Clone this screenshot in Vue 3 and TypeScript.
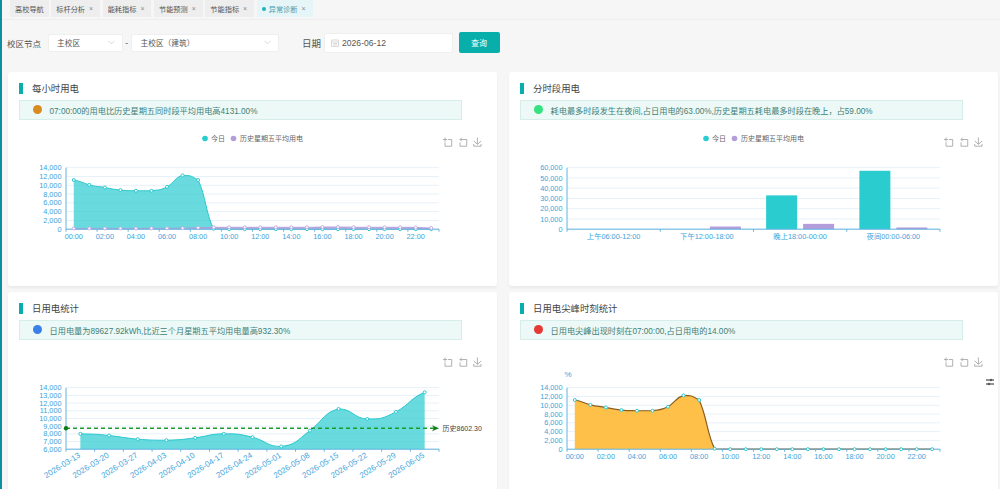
<template>
  <div class="page">
    <div class="tabs">
      <div
        v-for="t in tabs"
        :key="t.label"
        class="tab"
        :class="{ active: t.active, closable: t.closable }"
      >
        <i v-if="t.active" class="tab-dot"></i>
        <span>{{ t.label }}</span>
        <span v-if="t.closable" class="tab-x">×</span>
      </div>
    </div>

    <div class="filters">
      <span class="lbl">校区节点</span>
      <div class="select s1">
        <span>主校区</span>
        <svg class="chev" viewBox="0 0 8 5" width="7" height="5"><path d="M.5 .5 4 4 7.500 .5" /></svg>
      </div>
      <span class="dash">-</span>
      <div class="select s2">
        <span>主校区（建筑）</span>
        <svg class="chev" viewBox="0 0 8 5" width="7" height="5"><path d="M.5 .5 4 4 7.500 .5" /></svg>
      </div>
      <span class="lbl date-lbl">日期</span>
      <div class="date">
        <svg class="cal" viewBox="0 0 8 8" width="8" height="8">
          <path d="M.5 1h7v6.500h-7zM.5 3h7M2 4.500h4M2 6h4" />
        </svg>
        <span>2026-06-12</span>
      </div>
      <button class="query">查询</button>
    </div>

    <div class="grid">
      <section v-for="c in charts" :key="c.title" class="card">
        <h3 class="title">{{ c.title }}</h3>
        <div class="alert">
          <i class="alert-dot" :style="{ background: c.dot }"></i>
          <span>{{ c.message }}</span>
        </div>
        <svg class="chart" viewBox="0 0 489 167" width="489" height="167">
          <g v-if="c.legend" class="legend">
            <circle cx="197" cy="18.500" r="2.800" fill="#2accd0" />
            <text x="203" y="21">今日</text>
            <circle cx="225.500" cy="18.500" r="2.800" fill="#b39ddb" />
            <text x="232" y="21">历史星期五平均用电</text>
          </g>

          <g class="toolbox">
            <g transform="translate(435 17.500) scale(.15)">
              <path d="M0,13.500h26.900 M13.500,26.900V0 M32.100,13.500H58V58H13.500 V32.100" />
            </g>
            <g transform="translate(450.500 17.500) scale(.15)">
              <path d="M22,1.400L9.900,13.500l12.300,12.300 M10.300,13.500H54.900v44.600 H10.300v-26" />
            </g>
            <g transform="translate(465 17.500) scale(.15)">
              <path d="M4.700,22.900L29.300,45.500L54.700,23.400M4.600,43.600L4.600,58L53.800,58L53.800,43.600M29.200,45.100L29.200,0" />
            </g>
          </g>

          <text v-if="c.unit" class="axis-text unit" x="59" y="37" text-anchor="middle">{{ c.unit }}</text>

          <line
            v-for="t in c.yTicks"
            :key="t.label"
            class="gridline"
            :x1="L"
            :x2="R"
            :y1="t.y"
            :y2="t.y"
          />
          <text
            v-for="t in c.yTicks"
            :key="'l' + t.label"
            class="axis-text"
            :x="L - 4.500"
            :y="t.y + 2.600"
            text-anchor="end"
          >{{ t.label }}</text>

          <template v-for="s in c.series" :key="s.key">
            <path :d="s.area" :fill="s.fill" />
            <path :d="s.line" fill="none" :stroke="s.stroke" :stroke-width="s.width" />
          </template>

          <rect
            v-for="b in c.bars"
            :key="b.key"
            :x="b.x"
            :y="b.y"
            :width="b.w"
            :height="b.h"
            :fill="b.color"
          />

          <line class="axis" :x1="L" :x2="L" :y1="TOP" :y2="BOTTOM" />
          <line class="axis" :x1="L" :x2="R" :y1="BOTTOM" :y2="BOTTOM" />
          <line
            v-for="x in c.xTicks"
            :key="x"
            class="axis"
            :x1="x"
            :x2="x"
            :y1="BOTTOM"
            :y2="BOTTOM + 2.500"
          />

          <template v-for="s in c.series" :key="s.key + 'p'">
            <circle
              v-for="(p, i) in s.points"
              :key="i"
              :cx="p.x"
              :cy="p.y"
              r="1.500"
              fill="#fff"
              :stroke="s.symbol"
              stroke-width="1"
            />
          </template>

          <text
            v-for="l in c.xLabels"
            :key="l.text"
            class="axis-text"
            :class="{ slanted: l.rotate }"
            :x="l.x"
            :y="l.rotate ? l.y : BOTTOM + 10"
            :text-anchor="l.rotate ? 'end' : 'middle'"
            :transform="l.rotate ? `rotate(-32 ${l.x} ${l.y})` : undefined"
          >{{ l.text }}</text>

          <g v-if="c.mark">
            <line
              :x1="L"
              :x2="R - 3"
              :y1="c.mark.y"
              :y2="c.mark.y"
              stroke="#1c9a2a"
              stroke-width="1.500"
              stroke-dasharray="4 3"
            />
            <circle :cx="L" :cy="c.mark.y" r="2.200" fill="#0f7d17" />
            <path
              :d="`M${R - 7} ${c.mark.y - 3}L${R} ${c.mark.y}L${R - 7} ${c.mark.y + 3}L${R - 5} ${c.mark.y}Z`"
              fill="#0f7d17"
            />
            <text class="mark-text" :x="R + 3.500" :y="c.mark.y + 2.500">{{ c.mark.label }}</text>
          </g>
        </svg>
      </section>
    </div>

    <svg class="filter-btn" viewBox="0 0 8 8" width="8" height="8">
      <path d="M0 2h8M0 6h8M5 .8v2.400M3 4.800v2.400" />
    </svg>
  </div>
</template>

<script setup lang="ts">
interface Pt {
  x: number
  y: number
}

const L = 58
const R = 431
const TOP = 47.7
const BOTTOM = 109.2

const tabs = [
  { label: '高校导航', closable: false, active: false },
  { label: '标杆分析', closable: true, active: false },
  { label: '能耗指标', closable: true, active: false },
  { label: '节能预测', closable: true, active: false },
  { label: '节能指标', closable: true, active: false },
  { label: '异常诊断', closable: true, active: true }
]

const todayHours = [
  11200, 10100, 9500, 8900, 8750, 8750, 9650, 12250, 11200, 100, 0, 0,
  0, 0, 0, 0, 0, 0, 0, 0, 0, 0, 0, 0
]
const histHours = [
  180, 180, 180, 180, 180, 200, 200, 240, 350, 420, 430, 430,
  430, 430, 430, 430, 480, 500, 450, 430, 430, 430, 400, 280
]
const weekly = [
  8000, 7780, 7300, 7170, 7480, 8000, 7560, 6350, 8420, 11240, 9930, 10850, 13400
]
const dates = [
  '2026-03-13', '2026-03-20', '2026-03-27', '2026-04-03', '2026-04-10', '2026-04-17',
  '2026-04-24', '2026-05-01', '2026-05-08', '2026-05-15', '2026-05-22', '2026-05-29', '2026-06-05'
]

function scaleY(v: number, min: number, max: number) {
  return BOTTOM - ((v - min) / (max - min)) * (BOTTOM - TOP)
}

function yTicks(min: number, max: number, step: number) {
  const out = []
  for (let v = min; v <= max; v += step) {
    out.push({ y: scaleY(v, min, max), label: v.toLocaleString('en-US') })
  }
  return out
}

function toPoints(values: number[], min: number, max: number): Pt[] {
  const step = (R - L) / values.length
  return values.map((v, i) => ({ x: L + step * (i + 0.5), y: scaleY(v, min, max) }))
}

// same idea as echarts smooth: tangents from the neighbours, clamped so the curve does not overshoot
function smooth(pts: Pt[]) {
  let d = `M${pts[0].x} ${pts[0].y}`
  for (let i = 0; i < pts.length - 1; i++) {
    const p0 = pts[Math.max(i - 1, 0)]
    const p1 = pts[i]
    const p2 = pts[i + 1]
    const p3 = pts[Math.min(i + 2, pts.length - 1)]
    const lo = Math.min(p1.y, p2.y)
    const hi = Math.max(p1.y, p2.y)
    const c1y = Math.min(hi, Math.max(lo, p1.y + (p2.y - p0.y) * 0.3))
    const c2y = Math.min(hi, Math.max(lo, p2.y - (p3.y - p1.y) * 0.3))
    d += `C${p1.x + (p2.x - p1.x) * 0.5} ${c1y} ${p2.x - (p2.x - p1.x) * 0.5} ${c2y} ${p2.x} ${p2.y}`
  }
  return d
}

function makeSeries(key: string, values: number[], min: number, max: number, fill: string, stroke: string, symbol: string, width = 1) {
  const points = toPoints(values, min, max)
  const line = smooth(points)
  const last = points[points.length - 1]
  return {
    key,
    points,
    line,
    area: `${line}L${last.x} ${BOTTOM}L${points[0].x} ${BOTTOM}Z`,
    fill,
    stroke,
    symbol,
    width
  }
}

const hourStep = (R - L) / 24
const hourTicks = Array.from({ length: 13 }, (_, i) => L + hourStep * 2 * i)
const hourLabels = Array.from({ length: 12 }, (_, i) => ({
  text: `${String(i * 2).padStart(2, '0')}:00`,
  x: L + hourStep * (i * 2 + 0.5),
  y: 0,
  rotate: false
}))

const periodStep = (R - L) / 4
const periodNames = ['上午06:00-12:00', '下午12:00-18:00', '晚上18:00-00:00', '夜间00:00-06:00']
const periodToday = [0, 0, 33000, 57000]
const periodHist = [0, 2600, 5200, 1700]

const bars = periodNames.flatMap((_, i) => {
  const start = L + periodStep * i + (periodStep - 68) / 2
  const make = (key: string, v: number, x: number, color: string) => {
    const y = scaleY(v, 0, 60000)
    return { key, x, y, w: 31, h: BOTTOM - y, color }
  }
  return [
    make(`t${i}`, periodToday[i], start, '#2accd0'),
    make(`h${i}`, periodHist[i], start + 37, '#b39ddb')
  ]
})

const weekStep = (R - L) / 13

const charts = [
  {
    title: '每小时用电',
    dot: '#d98a20',
    message: '07:00:00的用电比历史星期五同时段平均用电高4131.00%',
    legend: true,
    unit: '',
    yTicks: yTicks(0, 14000, 2000),
    series: [
      makeSeries('today', todayHours, 0, 14000, 'rgba(42,204,208,.7)', '#2ac8d0', '#2ac8d0'),
      makeSeries('hist', histHours, 0, 14000, 'rgba(179,157,219,.8)', '#b39ddb', '#c4aee4')
    ],
    bars: [],
    xTicks: hourTicks,
    xLabels: hourLabels,
    mark: null
  },
  {
    title: '分时段用电',
    dot: '#35e27f',
    message: '耗电最多时段发生在夜间,占日用电的63.00%,历史星期五耗电最多时段在晚上，占59.00%',
    legend: true,
    unit: '',
    yTicks: yTicks(0, 60000, 10000),
    series: [],
    bars,
    xTicks: Array.from({ length: 5 }, (_, i) => L + periodStep * i),
    xLabels: periodNames.map((text, i) => ({ text, x: L + periodStep * (i + 0.5), y: 0, rotate: false })),
    mark: null
  },
  {
    title: '日用电统计',
    dot: '#3a80e8',
    message: '日用电量为89627.92kWh,比近三个月星期五平均用电量高932.30%',
    legend: false,
    unit: '',
    yTicks: yTicks(6000, 14000, 1000),
    series: [makeSeries('week', weekly, 6000, 14000, 'rgba(42,204,208,.7)', '#2ac8d0', '#2ac8d0')],
    bars: [],
    xTicks: Array.from({ length: 14 }, (_, i) => L + weekStep * i),
    xLabels: dates.map((text, i) => ({ text, x: L + weekStep * (i + 0.5) + 0.5, y: BOTTOM + 7.5, rotate: true })),
    mark: { y: 88.2, label: '历史8602.30' }
  },
  {
    title: '日用电尖峰时刻统计',
    dot: '#e53935',
    message: '日用电尖峰出现时刻在07:00:00,占日用电的14.00%',
    legend: false,
    unit: '%',
    yTicks: yTicks(0, 14000, 2000),
    series: [makeSeries('peak', todayHours, 0, 14000, '#ffc04a', '#8b5e1e', '#2ac8d0', 1.2)],
    bars: [],
    xTicks: hourTicks,
    xLabels: hourLabels,
    mark: null
  }
]
</script>

<style>
html,
body {
  height: 489px;
  overflow: hidden;
}
</style>

<style scoped>
.page {
  position: relative;
  box-sizing: border-box;
  width: 1000px;
  height: 489px;
  overflow: hidden;
  border-left: 2px solid #0e8fa0;
  background: #f6f6f6;
  font-family: "Liberation Sans", "Noto Sans CJK SC", sans-serif;
  color: #555;
}

.tabs {
  display: flex;
  gap: 2.500px;
  height: 20px;
  padding-left: 8px;
  border-bottom: 1px solid #eee;
  box-sizing: border-box;
}

.tab {
  display: flex;
  align-items: center;
  height: 17px;
  padding: 0 5px;
  background: #eee;
  font-size: 7.200px;
  color: #555;
}

.tab.closable {
  padding-right: 7px;
}

.tab-x {
  margin-left: 4px;
  color: #888;
  font-size: 7px;
}

.tab.active {
  background: #e6f5f8;
  color: #4a9aa8;
}

.tab-dot {
  width: 4px;
  height: 4px;
  margin-right: 3px;
  border-radius: 50%;
  background: #1fb5b5;
}

.filters {
  display: flex;
  align-items: center;
  height: 21px;
  margin: 12px 0 19px;
  padding-left: 5px;
  font-size: 8.500px;
}

.select {
  display: flex;
  align-items: center;
  justify-content: space-between;
  box-sizing: border-box;
  height: 18px;
  padding: 0 7px 0 8.500px;
  background: #fff;
  border: 1px solid #efefef;
  border-radius: 2px;
  font-size: 7.700px;
  color: #555;
}

.s1 {
  width: 75px;
  margin-left: 6.500px;
}

.s2 {
  width: 147.500px;
}

.dash {
  width: 8.500px;
  text-align: center;
}

.chev path {
  fill: none;
  stroke: #c8c8c8;
  stroke-width: .8;
}

.date-lbl {
  margin-left: 23.500px;
  font-size: 9.500px;
}

.date {
  display: flex;
  align-items: center;
  gap: 3px;
  box-sizing: border-box;
  width: 128.500px;
  height: 20px;
  margin-left: 3px;
  padding-left: 6px;
  background: #fff;
  border: 1px solid #efefef;
  border-radius: 2px;
  font-size: 8.600px;
}

.cal path {
  fill: none;
  stroke: #ccc;
  stroke-width: .7;
}

.query {
  width: 41px;
  height: 21px;
  margin-left: 6px;
  padding: 0;
  border: none;
  border-radius: 2px;
  background: #08aeaa;
  color: #fff;
  font: inherit;
  font-size: 8px;
}

.grid {
  display: grid;
  grid-template-columns: 489px 489px;
  gap: 6px 12px;
  padding-left: 6px;
}

.card {
  box-sizing: border-box;
  height: 214px;
  padding-top: 10.500px;
  background: #fff;
  border-radius: 3px;
  box-shadow: 0 2px 3px rgba(0, 0, 0, .05);
}

.title {
  height: 11px;
  margin: 0 0 6.500px 11px;
  padding-left: 9px;
  border-left: 4px solid #08aeaa;
  font-size: 9.400px;
  font-weight: 400;
  line-height: 11px;
  color: #444;
}

.alert {
  display: flex;
  align-items: center;
  gap: 7.500px;
  box-sizing: border-box;
  width: 443px;
  height: 19.500px;
  margin-left: 11px;
  padding-left: 13px;
  background: #edf9f6;
  border: 1px solid #d6eeea;
  font-size: 8.200px;
  color: #3f7f78;
}

.alert-dot {
  width: 9px;
  height: 9px;
  border-radius: 50%;
}

.chart {
  display: block;
}

.legend text {
  font-size: 7px;
  fill: #666;
}

.toolbox path {
  fill: none;
  stroke: #a8a8a8;
  stroke-width: 6;
}

.gridline {
  stroke: #e7f1f9;
  stroke-width: 1;
}

.axis {
  stroke: #63b4e0;
  stroke-width: 1;
}

.axis-text {
  font-size: 7.300px;
  fill: #3ba4dc;
}

.axis-text.slanted {
  font-size: 8px;
}

.axis-text.unit {
  font-size: 8px;
}

.mark-text {
  font-size: 7px;
  fill: #444;
}

.filter-btn {
  position: absolute;
  top: 378px;
  left: 984px;
}

.filter-btn path {
  fill: none;
  stroke: #222;
  stroke-width: 1;
}
</style>
